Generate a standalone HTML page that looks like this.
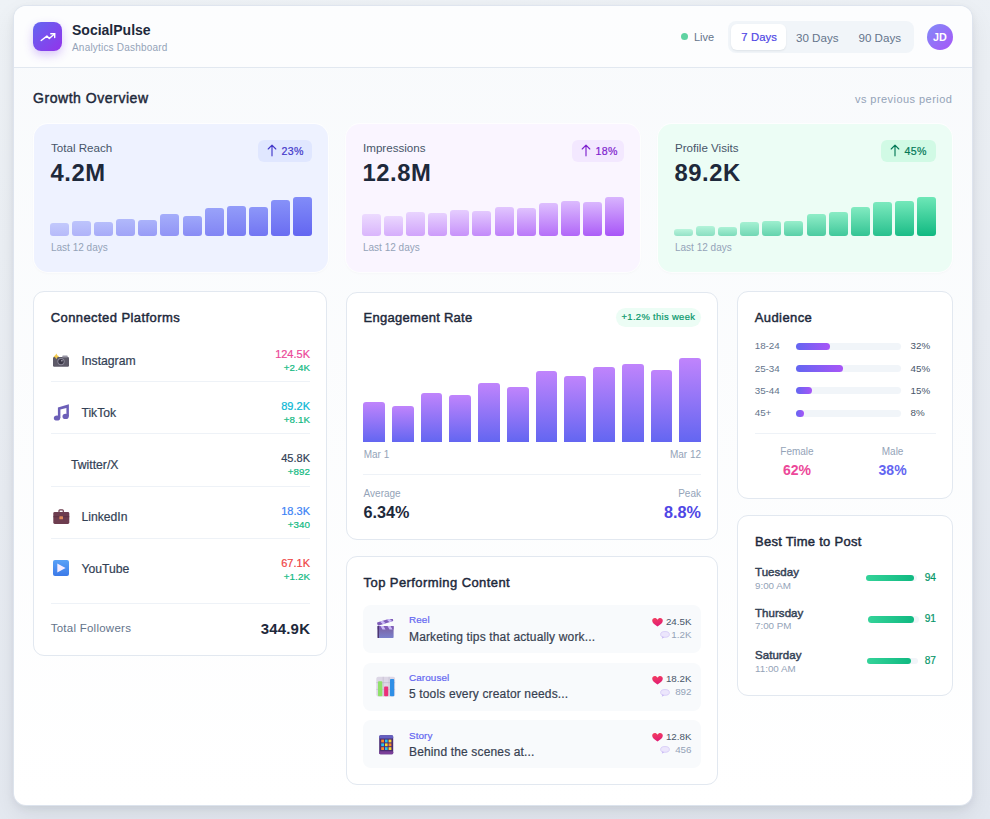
<!DOCTYPE html>
<html><head><meta charset="utf-8">
<style>
*{box-sizing:border-box;margin:0;padding:0}
html,body{width:990px;height:819px;overflow:hidden}
body{font-family:"Liberation Sans",sans-serif;background:linear-gradient(170deg,#eef2f6 0%,#e8ecf2 50%,#e2e7ef 100%);position:relative;color:#1e293b}
.t{position:absolute;white-space:nowrap;line-height:1}
.abs{position:absolute}
#shell{position:absolute;left:14px;top:6px;width:958px;height:799px;border-radius:12px;background:linear-gradient(180deg,#f8fafc 0%,#ffffff 100%);box-shadow:0 0 0 1px rgba(222,228,238,.9),0 10px 24px rgba(15,23,42,.08),0 3px 8px rgba(15,23,42,.07);overflow:hidden}
#hdr{position:absolute;left:0;top:0;width:958px;height:62px;background:rgba(255,255,255,.6);border-bottom:1px solid #e2e8f0}
</style></head><body>
<div id="shell"><div id="hdr"></div></div>
<div class="abs" style="left:33px;top:22px;width:29px;height:29px;border-radius:8px;background:linear-gradient(135deg,#6366f1 0%,#9333ea 100%);box-shadow:0 4px 10px rgba(124,58,237,.28)"></div>
<svg class="abs" style="left:33px;top:22px" width="29" height="29" viewBox="0 0 29 29"><polyline points="8.2,18.5 13.9,14.1 16.3,16.6 21.7,11.7" fill="none" stroke="#fff" stroke-width="1.4" stroke-linecap="round" stroke-linejoin="round"/><polyline points="17.8,11.7 21.7,11.7 21.7,15.6" fill="none" stroke="#fff" stroke-width="1.4" stroke-linecap="round" stroke-linejoin="round"/></svg>
<div class="t" style="top:23.15px;font-size:14px;color:#1e293b;font-weight:700;left:72px;">SocialPulse</div>
<div class="t" style="top:42.73px;font-size:10px;color:#94a3b8;letter-spacing:0.2px;left:72px;">Analytics Dashboard</div>
<div class="abs" style="left:681px;top:33.3px;width:7px;height:7px;border-radius:50%;background:#5fd3a2"></div>
<div class="t" style="top:32.09px;font-size:11px;color:#64748b;left:694px;">Live</div>
<div class="abs" style="left:728px;top:21px;width:186px;height:32px;border-radius:8px;background:#f1f5f9"></div>
<div class="abs" style="left:731px;top:24px;width:55px;height:26px;border-radius:6px;background:#fff;box-shadow:0 1px 2px rgba(15,23,42,.08)"></div>
<div class="t" style="top:31.83px;font-size:11.3px;color:#4f46e5;-webkit-text-stroke:0.2px #4f46e5;letter-spacing:0.1px;left:741.3px;">7 Days</div>
<div class="t" style="top:31.58px;font-size:11.6px;color:#64748b;left:796px;">30 Days</div>
<div class="t" style="top:31.58px;font-size:11.6px;color:#64748b;left:858.5px;">90 Days</div>
<div class="abs" style="left:927px;top:24px;width:26px;height:26px;border-radius:50%;background:linear-gradient(135deg,#818cf8 0%,#a855f7 100%)"></div>
<div class="t" style="top:32.16px;font-size:10.8px;color:#fff;font-weight:700;left:840px;width:200px;text-align:center;">JD</div>
<div class="t" style="top:91.25px;font-size:14px;color:#1e293b;-webkit-text-stroke:0.45px #1e293b;letter-spacing:0.55px;left:33px;">Growth Overview</div>
<div class="t" style="top:93.69px;font-size:11px;color:#94a3b8;letter-spacing:0.45px;right:37.700000000000045px;">vs previous period</div>
<div class="abs" style="left:34px;top:124px;width:294px;height:148px;border-radius:14px;background:#eef2ff;box-shadow:0 0 0 1px rgba(255,255,255,.8),0 1px 3px rgba(15,23,42,.04)"></div>
<div class="t" style="top:141.98px;font-size:11.6px;color:#475569;left:51px;">Total Reach</div>
<div class="t" style="top:160.65px;font-size:23.8px;color:#1e293b;font-weight:700;letter-spacing:0.5px;left:50.6px;">4.2M</div>
<div class="abs" style="left:257.5px;top:140px;width:54px;height:22px;border-radius:6px;background:#e0e7ff"></div>
<svg class="abs" style="left:266.5px;top:144px" width="10" height="13" viewBox="0 0 10 13"><path d="M5 11.8V1.2M1.2 5L5 1.2L8.8 5" fill="none" stroke="#4338ca" stroke-width="1.15" stroke-linecap="round" stroke-linejoin="round"/></svg>
<div class="t" style="top:145.82px;font-size:10.6px;color:#4338ca;-webkit-text-stroke:0.2px #4338ca;letter-spacing:0.3px;left:281.5px;">23%</div>
<div class="abs" style="left:50.0px;top:223px;width:19.08px;height:13px;border-radius:3px;background:linear-gradient(180deg,#818cf8,#6366f1);opacity:0.40"></div>
<div class="abs" style="left:72.08px;top:221px;width:19.08px;height:15px;border-radius:3px;background:linear-gradient(180deg,#818cf8,#6366f1);opacity:0.45"></div>
<div class="abs" style="left:94.17px;top:222px;width:19.08px;height:14px;border-radius:3px;background:linear-gradient(180deg,#818cf8,#6366f1);opacity:0.51"></div>
<div class="abs" style="left:116.25px;top:219px;width:19.08px;height:17px;border-radius:3px;background:linear-gradient(180deg,#818cf8,#6366f1);opacity:0.56"></div>
<div class="abs" style="left:138.33px;top:220px;width:19.08px;height:16px;border-radius:3px;background:linear-gradient(180deg,#818cf8,#6366f1);opacity:0.62"></div>
<div class="abs" style="left:160.42px;top:214px;width:19.08px;height:22px;border-radius:3px;background:linear-gradient(180deg,#818cf8,#6366f1);opacity:0.67"></div>
<div class="abs" style="left:182.5px;top:216px;width:19.08px;height:20px;border-radius:3px;background:linear-gradient(180deg,#818cf8,#6366f1);opacity:0.73"></div>
<div class="abs" style="left:204.58px;top:208px;width:19.08px;height:28px;border-radius:3px;background:linear-gradient(180deg,#818cf8,#6366f1);opacity:0.78"></div>
<div class="abs" style="left:226.67px;top:206px;width:19.08px;height:30px;border-radius:3px;background:linear-gradient(180deg,#818cf8,#6366f1);opacity:0.84"></div>
<div class="abs" style="left:248.75px;top:207px;width:19.08px;height:29px;border-radius:3px;background:linear-gradient(180deg,#818cf8,#6366f1);opacity:0.89"></div>
<div class="abs" style="left:270.83px;top:200px;width:19.08px;height:36px;border-radius:3px;background:linear-gradient(180deg,#818cf8,#6366f1);opacity:0.95"></div>
<div class="abs" style="left:292.92px;top:197px;width:19.08px;height:39px;border-radius:3px;background:linear-gradient(180deg,#818cf8,#6366f1);opacity:1.00"></div>
<div class="t" style="top:242.53px;font-size:10px;color:#94a3b8;left:51px;">Last 12 days</div>
<div class="abs" style="left:346px;top:124px;width:294px;height:148px;border-radius:14px;background:#faf5ff;box-shadow:0 0 0 1px rgba(255,255,255,.8),0 1px 3px rgba(15,23,42,.04)"></div>
<div class="t" style="top:141.98px;font-size:11.6px;color:#475569;left:363px;">Impressions</div>
<div class="t" style="top:160.65px;font-size:23.8px;color:#1e293b;font-weight:700;letter-spacing:0.5px;left:362.6px;">12.8M</div>
<div class="abs" style="left:571.5px;top:140px;width:52px;height:22px;border-radius:6px;background:#f3e8ff"></div>
<svg class="abs" style="left:580.5px;top:144px" width="10" height="13" viewBox="0 0 10 13"><path d="M5 11.8V1.2M1.2 5L5 1.2L8.8 5" fill="none" stroke="#7e22ce" stroke-width="1.15" stroke-linecap="round" stroke-linejoin="round"/></svg>
<div class="t" style="top:145.82px;font-size:10.6px;color:#7e22ce;-webkit-text-stroke:0.2px #7e22ce;letter-spacing:0.3px;left:595.5px;">18%</div>
<div class="abs" style="left:362.0px;top:214.3px;width:19.08px;height:21.7px;border-radius:3px;background:linear-gradient(180deg,#d8b4fe,#a855f7);opacity:0.40"></div>
<div class="abs" style="left:384.08px;top:216.3px;width:19.08px;height:19.7px;border-radius:3px;background:linear-gradient(180deg,#d8b4fe,#a855f7);opacity:0.45"></div>
<div class="abs" style="left:406.17px;top:212.4px;width:19.08px;height:23.6px;border-radius:3px;background:linear-gradient(180deg,#d8b4fe,#a855f7);opacity:0.51"></div>
<div class="abs" style="left:428.25px;top:213.4px;width:19.08px;height:22.6px;border-radius:3px;background:linear-gradient(180deg,#d8b4fe,#a855f7);opacity:0.56"></div>
<div class="abs" style="left:450.33px;top:210.1px;width:19.08px;height:25.9px;border-radius:3px;background:linear-gradient(180deg,#d8b4fe,#a855f7);opacity:0.62"></div>
<div class="abs" style="left:472.42px;top:211.4px;width:19.08px;height:24.6px;border-radius:3px;background:linear-gradient(180deg,#d8b4fe,#a855f7);opacity:0.67"></div>
<div class="abs" style="left:494.5px;top:207.2px;width:19.08px;height:28.8px;border-radius:3px;background:linear-gradient(180deg,#d8b4fe,#a855f7);opacity:0.73"></div>
<div class="abs" style="left:516.58px;top:208.2px;width:19.08px;height:27.8px;border-radius:3px;background:linear-gradient(180deg,#d8b4fe,#a855f7);opacity:0.78"></div>
<div class="abs" style="left:538.67px;top:203.4px;width:19.08px;height:32.6px;border-radius:3px;background:linear-gradient(180deg,#d8b4fe,#a855f7);opacity:0.84"></div>
<div class="abs" style="left:560.75px;top:200.5px;width:19.08px;height:35.5px;border-radius:3px;background:linear-gradient(180deg,#d8b4fe,#a855f7);opacity:0.89"></div>
<div class="abs" style="left:582.83px;top:202.4px;width:19.08px;height:33.6px;border-radius:3px;background:linear-gradient(180deg,#d8b4fe,#a855f7);opacity:0.95"></div>
<div class="abs" style="left:604.92px;top:197.2px;width:19.08px;height:38.8px;border-radius:3px;background:linear-gradient(180deg,#d8b4fe,#a855f7);opacity:1.00"></div>
<div class="t" style="top:242.53px;font-size:10px;color:#94a3b8;left:363px;">Last 12 days</div>
<div class="abs" style="left:658px;top:124px;width:294px;height:148px;border-radius:14px;background:#ecfdf5;box-shadow:0 0 0 1px rgba(255,255,255,.8),0 1px 3px rgba(15,23,42,.04)"></div>
<div class="t" style="top:141.98px;font-size:11.6px;color:#475569;left:675px;">Profile Visits</div>
<div class="t" style="top:160.65px;font-size:23.8px;color:#1e293b;font-weight:700;letter-spacing:0.5px;left:674.6px;">89.2K</div>
<div class="abs" style="left:880.5px;top:140px;width:55px;height:22px;border-radius:6px;background:#d1fae5"></div>
<svg class="abs" style="left:889.5px;top:144px" width="10" height="13" viewBox="0 0 10 13"><path d="M5 11.8V1.2M1.2 5L5 1.2L8.8 5" fill="none" stroke="#047857" stroke-width="1.15" stroke-linecap="round" stroke-linejoin="round"/></svg>
<div class="t" style="top:145.82px;font-size:10.6px;color:#047857;-webkit-text-stroke:0.2px #047857;letter-spacing:0.3px;left:904.5px;">45%</div>
<div class="abs" style="left:674.0px;top:228.6px;width:19.08px;height:7.4px;border-radius:3px;background:linear-gradient(180deg,#6ee7b7,#10b981);opacity:0.40"></div>
<div class="abs" style="left:696.08px;top:226.3px;width:19.08px;height:9.7px;border-radius:3px;background:linear-gradient(180deg,#6ee7b7,#10b981);opacity:0.45"></div>
<div class="abs" style="left:718.17px;top:227.3px;width:19.08px;height:8.7px;border-radius:3px;background:linear-gradient(180deg,#6ee7b7,#10b981);opacity:0.51"></div>
<div class="abs" style="left:740.25px;top:222.4px;width:19.08px;height:13.6px;border-radius:3px;background:linear-gradient(180deg,#6ee7b7,#10b981);opacity:0.56"></div>
<div class="abs" style="left:762.33px;top:220.5px;width:19.08px;height:15.5px;border-radius:3px;background:linear-gradient(180deg,#6ee7b7,#10b981);opacity:0.62"></div>
<div class="abs" style="left:784.42px;top:221.4px;width:19.08px;height:14.6px;border-radius:3px;background:linear-gradient(180deg,#6ee7b7,#10b981);opacity:0.67"></div>
<div class="abs" style="left:806.5px;top:214.3px;width:19.08px;height:21.7px;border-radius:3px;background:linear-gradient(180deg,#6ee7b7,#10b981);opacity:0.73"></div>
<div class="abs" style="left:828.58px;top:212.4px;width:19.08px;height:23.6px;border-radius:3px;background:linear-gradient(180deg,#6ee7b7,#10b981);opacity:0.78"></div>
<div class="abs" style="left:850.67px;top:207.2px;width:19.08px;height:28.8px;border-radius:3px;background:linear-gradient(180deg,#6ee7b7,#10b981);opacity:0.84"></div>
<div class="abs" style="left:872.75px;top:202.4px;width:19.08px;height:33.6px;border-radius:3px;background:linear-gradient(180deg,#6ee7b7,#10b981);opacity:0.89"></div>
<div class="abs" style="left:894.83px;top:200.5px;width:19.08px;height:35.5px;border-radius:3px;background:linear-gradient(180deg,#6ee7b7,#10b981);opacity:0.95"></div>
<div class="abs" style="left:916.92px;top:197.2px;width:19.08px;height:38.8px;border-radius:3px;background:linear-gradient(180deg,#6ee7b7,#10b981);opacity:1.00"></div>
<div class="t" style="top:242.53px;font-size:10px;color:#94a3b8;left:675px;">Last 12 days</div>
<div class="abs" style="left:33px;top:291px;width:294px;height:365px;border-radius:11px;background:#fff;border:1px solid #e2e8f0"></div>
<div class="t" style="top:310.99px;font-size:13px;color:#1e293b;-webkit-text-stroke:0.45px #1e293b;letter-spacing:0.42px;left:50.7px;">Connected Platforms</div>
<svg class="abs" style="left:52px;top:353px" width="18" height="15" viewBox="0 0 18 15"><rect x="1" y="4" width="16" height="9.8" rx="1.2" fill="#5d5a68"/><rect x="10.3" y="2.6" width="5.4" height="2" rx="0.7" fill="#9a97a6"/><circle cx="9" cy="8.6" r="3.6" fill="#8e8b9b"/><circle cx="9" cy="8.6" r="2.7" fill="#3b3847"/><circle cx="9.9" cy="7.8" r="0.7" fill="#c9c6d4"/><path d="M4.3 0.6 Q4.8 2.7 7.1 3.4 Q4.8 4.1 4.3 6.2 Q3.8 4.1 1.5 3.4 Q3.8 2.7 4.3 0.6 Z" fill="#f2c94c"/></svg>
<div class="t" style="top:354.77px;font-size:12.2px;color:#334155;-webkit-text-stroke:0.2px #334155;left:81.4px;">Instagram</div>
<div class="t" style="top:348.69px;font-size:11px;color:#ec4899;-webkit-text-stroke:0.2px #ec4899;right:680px;">124.5K</div>
<div class="t" style="top:362.70px;font-size:9.8px;color:#10b981;-webkit-text-stroke:0.2px #10b981;letter-spacing:0.1px;right:679.9px;">+2.4K</div>
<div class="abs" style="left:50.7px;top:381.0px;width:259.3px;height:1px;background:#eef2f7"></div>
<svg class="abs" style="left:53px;top:403px" width="17" height="18" viewBox="0 0 17 18"><path d="M4.9 4.4 L15.9 1.2 L15.9 13.5 L13.4 13.5 L13.4 4.9 L7.4 6.6 L7.4 15 L4.9 15 Z" fill="#6c5fb8"/><ellipse cx="4" cy="15" rx="3.2" ry="2.6" fill="#6c5fb8"/><ellipse cx="12.6" cy="13.4" rx="3.1" ry="2.6" fill="#6c5fb8"/></svg>
<div class="t" style="top:406.77px;font-size:12.2px;color:#334155;-webkit-text-stroke:0.2px #334155;left:81.4px;">TikTok</div>
<div class="t" style="top:400.99px;font-size:11px;color:#06b6d4;-webkit-text-stroke:0.2px #06b6d4;right:680px;">89.2K</div>
<div class="t" style="top:415.00px;font-size:9.8px;color:#10b981;-webkit-text-stroke:0.2px #10b981;letter-spacing:0.1px;right:679.9px;">+8.1K</div>
<div class="abs" style="left:50.7px;top:433.3px;width:259.3px;height:1px;background:#eef2f7"></div>
<div class="t" style="top:458.77px;font-size:12.2px;color:#334155;-webkit-text-stroke:0.2px #334155;left:71px;">Twitter/X</div>
<div class="t" style="top:453.29px;font-size:11px;color:#334155;-webkit-text-stroke:0.2px #334155;right:680px;">45.8K</div>
<div class="t" style="top:467.30px;font-size:9.8px;color:#10b981;-webkit-text-stroke:0.2px #10b981;letter-spacing:0.1px;right:679.9px;">+892</div>
<div class="abs" style="left:50.7px;top:485.6px;width:259.3px;height:1px;background:#eef2f7"></div>
<svg class="abs" style="left:53px;top:509px" width="17" height="16" viewBox="0 0 17 16"><path d="M6 3.2 V1.8 Q6 0.9 6.9 0.9 H9.4 Q10.3 0.9 10.3 1.8 V3.2" fill="none" stroke="#6d3d4f" stroke-width="1.2"/><rect x="0.3" y="3" width="16" height="12" rx="1.4" fill="#6d3d4f"/><rect x="0.3" y="7.4" width="16" height="0.8" fill="#5a2f40"/><rect x="6.4" y="7.2" width="3.6" height="3" rx="0.5" fill="#e08a5a"/></svg>
<div class="t" style="top:510.77px;font-size:12.2px;color:#334155;-webkit-text-stroke:0.2px #334155;left:81.4px;">LinkedIn</div>
<div class="t" style="top:505.59px;font-size:11px;color:#3b82f6;-webkit-text-stroke:0.2px #3b82f6;right:680px;">18.3K</div>
<div class="t" style="top:519.60px;font-size:9.8px;color:#10b981;-webkit-text-stroke:0.2px #10b981;letter-spacing:0.1px;right:679.9px;">+340</div>
<div class="abs" style="left:50.7px;top:537.9px;width:259.3px;height:1px;background:#eef2f7"></div>
<svg class="abs" style="left:53px;top:560px" width="17" height="17" viewBox="0 0 17 17"><defs><linearGradient id="ytg" x1="0" y1="0" x2="0" y2="1"><stop offset="0" stop-color="#5aa2f7"/><stop offset="1" stop-color="#3b7ae8"/></linearGradient></defs><rect x="0" y="0" width="16" height="16" rx="2" fill="url(#ytg)"/><path d="M4.3 3.4 L12.6 8 L4.3 12.6 Z" fill="#f5ecff"/></svg>
<div class="t" style="top:562.77px;font-size:12.2px;color:#334155;-webkit-text-stroke:0.2px #334155;left:81.4px;">YouTube</div>
<div class="t" style="top:557.89px;font-size:11px;color:#ef4444;-webkit-text-stroke:0.2px #ef4444;right:680px;">67.1K</div>
<div class="t" style="top:571.90px;font-size:9.8px;color:#10b981;-webkit-text-stroke:0.2px #10b981;letter-spacing:0.1px;right:679.9px;">+1.2K</div>
<div class="abs" style="left:50.7px;top:603px;width:259.3px;height:1px;background:#eef2f7"></div>
<div class="t" style="top:622.66px;font-size:11.5px;color:#64748b;letter-spacing:0.25px;left:50.7px;">Total Followers</div>
<div class="t" style="top:621.30px;font-size:15px;color:#1e293b;font-weight:700;letter-spacing:0.2px;right:679.8px;">344.9K</div>
<div class="abs" style="left:346px;top:291.5px;width:372px;height:248px;border-radius:11px;background:#fff;border:1px solid #e2e8f0"></div>
<div class="t" style="top:310.99px;font-size:13px;color:#1e293b;-webkit-text-stroke:0.45px #1e293b;letter-spacing:0.27px;left:363.6px;">Engagement Rate</div>
<div class="abs" style="left:615.8px;top:308px;width:85.2px;height:19px;border-radius:10px;background:#ecfdf5"></div>
<div class="t" style="top:312.04px;font-size:9.4px;color:#059669;-webkit-text-stroke:0.2px #059669;letter-spacing:0.35px;left:558.4px;width:200px;text-align:center;">+1.2% this week</div>
<div class="abs" style="left:363.0px;top:402.2px;width:21.8px;height:39.6px;border-radius:3px 3px 0 0;background:linear-gradient(180deg,#c084fc 0%,#6366f1 100%)"></div>
<div class="abs" style="left:391.75px;top:406.2px;width:21.8px;height:35.6px;border-radius:3px 3px 0 0;background:linear-gradient(180deg,#c084fc 0%,#6366f1 100%)"></div>
<div class="abs" style="left:420.5px;top:393.3px;width:21.8px;height:48.5px;border-radius:3px 3px 0 0;background:linear-gradient(180deg,#c084fc 0%,#6366f1 100%)"></div>
<div class="abs" style="left:449.25px;top:395.1px;width:21.8px;height:46.7px;border-radius:3px 3px 0 0;background:linear-gradient(180deg,#c084fc 0%,#6366f1 100%)"></div>
<div class="abs" style="left:478.0px;top:383.1px;width:21.8px;height:58.7px;border-radius:3px 3px 0 0;background:linear-gradient(180deg,#c084fc 0%,#6366f1 100%)"></div>
<div class="abs" style="left:506.75px;top:387.3px;width:21.8px;height:54.5px;border-radius:3px 3px 0 0;background:linear-gradient(180deg,#c084fc 0%,#6366f1 100%)"></div>
<div class="abs" style="left:535.5px;top:371.1px;width:21.8px;height:70.7px;border-radius:3px 3px 0 0;background:linear-gradient(180deg,#c084fc 0%,#6366f1 100%)"></div>
<div class="abs" style="left:564.25px;top:376.0px;width:21.8px;height:65.8px;border-radius:3px 3px 0 0;background:linear-gradient(180deg,#c084fc 0%,#6366f1 100%)"></div>
<div class="abs" style="left:593.0px;top:367.2px;width:21.8px;height:74.6px;border-radius:3px 3px 0 0;background:linear-gradient(180deg,#c084fc 0%,#6366f1 100%)"></div>
<div class="abs" style="left:621.75px;top:363.6px;width:21.8px;height:78.2px;border-radius:3px 3px 0 0;background:linear-gradient(180deg,#c084fc 0%,#6366f1 100%)"></div>
<div class="abs" style="left:650.5px;top:369.8px;width:21.8px;height:72px;border-radius:3px 3px 0 0;background:linear-gradient(180deg,#c084fc 0%,#6366f1 100%)"></div>
<div class="abs" style="left:679.25px;top:358.0px;width:21.8px;height:83.8px;border-radius:3px 3px 0 0;background:linear-gradient(180deg,#c084fc 0%,#6366f1 100%)"></div>
<div class="t" style="top:449.73px;font-size:10px;color:#94a3b8;left:363.7px;">Mar 1</div>
<div class="t" style="top:449.73px;font-size:10px;color:#94a3b8;right:289px;">Mar 12</div>
<div class="abs" style="left:363px;top:474px;width:338px;height:1px;background:#eef2f7"></div>
<div class="t" style="top:488.53px;font-size:10px;color:#94a3b8;left:363.6px;">Average</div>
<div class="t" style="top:503.78px;font-size:16.2px;color:#1e293b;font-weight:700;left:363.6px;">6.34%</div>
<div class="t" style="top:488.53px;font-size:10px;color:#94a3b8;right:289px;">Peak</div>
<div class="t" style="top:503.78px;font-size:16.2px;color:#4f46e5;font-weight:700;right:289px;">8.8%</div>
<div class="abs" style="left:346px;top:556px;width:372px;height:228.5px;border-radius:11px;background:#fff;border:1px solid #e2e8f0"></div>
<div class="t" style="top:576.19px;font-size:13px;color:#1e293b;-webkit-text-stroke:0.45px #1e293b;letter-spacing:0.42px;left:363.6px;">Top Performing Content</div>
<div class="abs" style="left:363px;top:604.9px;width:338px;height:48.3px;border-radius:8px;background:#f8fafc"></div>
<svg class="abs" style="left:377px;top:618.5px" width="18" height="20" viewBox="0 0 18 20"><defs><linearGradient id="clg" x1="0" y1="0" x2="0" y2="1"><stop offset="0" stop-color="#7b5f9e"/><stop offset="1" stop-color="#7a80cc"/></linearGradient></defs><rect x="0.6" y="7" width="16" height="12" rx="0.8" fill="url(#clg)"/><rect x="0.6" y="7" width="16" height="3.4" fill="#7e5cb8"/><path d="M3.5 7 L5.5 10.4 L8.5 10.4 L6.5 7 Z M10.5 7 L12.5 10.4 L15.5 10.4 L13.5 7 Z" fill="#c9b8f5"/><g transform="rotate(-17 1.5 6.5)"><rect x="0.8" y="3.2" width="16.3" height="3.3" rx="1" fill="#7e5cb8"/><path d="M4 3.2 L6 6.5 L9 6.5 L7 3.2 Z M11 3.2 L13 6.5 L16 6.5 L14 3.2 Z" fill="#c9b8f5"/></g><rect x="0.6" y="7" width="1.4" height="12" fill="#4b3571"/></svg>
<div class="t" style="top:615.42px;font-size:9.9px;color:#6366f1;-webkit-text-stroke:0.2px #6366f1;letter-spacing:0.1px;left:409px;">Reel</div>
<div class="t" style="top:630.54px;font-size:12px;color:#374151;-webkit-text-stroke:0.2px #374151;letter-spacing:0.15px;left:409px;">Marketing tips that actually work...</div>
<div class="t" style="top:616.50px;font-size:9.8px;color:#475569;right:298.5px;">24.5K</div>
<div class="t" style="top:629.60px;font-size:9.8px;color:#94a3b8;right:298.5px;">1.2K</div>
<svg class="abs" style="left:652.2px;top:618.1px" width="11" height="9" viewBox="0 0 11 9"><defs><linearGradient id="hg0" x1="0" y1="0" x2="0.3" y2="1"><stop offset="0" stop-color="#f43f5e"/><stop offset="1" stop-color="#e11d74"/></linearGradient></defs><path d="M5.5 8.6 C2.5 6.6 0.2 4.8 0.2 2.8 C0.2 1.2 1.4 0.1 2.8 0.1 C3.9 0.1 4.9 0.8 5.5 1.7 C6.1 0.8 7.1 0.1 8.2 0.1 C9.6 0.1 10.8 1.2 10.8 2.8 C10.8 4.8 8.5 6.6 5.5 8.6 Z" fill="url(#hg0)"/></svg>
<svg class="abs" style="left:659.8px;top:631.1px" width="10" height="8" viewBox="0 0 10 8"><ellipse cx="5" cy="3.4" rx="4.4" ry="2.9" fill="#ece6fc" stroke="#cbbcf5" stroke-width="0.6"/><path d="M2.2 5.6 L1.8 7.8 L4.4 6.2 Z" fill="#cbbcf5"/></svg>
<div class="abs" style="left:363px;top:662.5px;width:338px;height:48.3px;border-radius:8px;background:#f8fafc"></div>
<svg class="abs" style="left:375.8px;top:675.6px" width="20" height="21" viewBox="0 0 20 21"><rect x="0.3" y="0.8" width="18.8" height="19.6" rx="2" fill="#ddd7e6"/><path d="M7.2 0.8V20.4M13.1 0.8V20.4M0.3 6.6H19.1M0.3 13.4H19.1" stroke="#b9b2c6" stroke-width="0.5"/><rect x="2" y="5.2" width="4.3" height="15" rx="0.8" fill="#8fe06a"/><rect x="8.1" y="10.6" width="4.1" height="9.6" rx="0.8" fill="#ec2f7a"/><rect x="14" y="3" width="4.2" height="17.2" rx="0.8" fill="#2f8fe6"/></svg>
<div class="t" style="top:673.02px;font-size:9.9px;color:#6366f1;-webkit-text-stroke:0.2px #6366f1;letter-spacing:0.1px;left:409px;">Carousel</div>
<div class="t" style="top:688.14px;font-size:12px;color:#374151;-webkit-text-stroke:0.2px #374151;letter-spacing:0.15px;left:409px;">5 tools every creator needs...</div>
<div class="t" style="top:674.10px;font-size:9.8px;color:#475569;right:298.5px;">18.2K</div>
<div class="t" style="top:687.20px;font-size:9.8px;color:#94a3b8;right:298.5px;">892</div>
<svg class="abs" style="left:652.2px;top:675.7px" width="11" height="9" viewBox="0 0 11 9"><defs><linearGradient id="hg1" x1="0" y1="0" x2="0.3" y2="1"><stop offset="0" stop-color="#f43f5e"/><stop offset="1" stop-color="#e11d74"/></linearGradient></defs><path d="M5.5 8.6 C2.5 6.6 0.2 4.8 0.2 2.8 C0.2 1.2 1.4 0.1 2.8 0.1 C3.9 0.1 4.9 0.8 5.5 1.7 C6.1 0.8 7.1 0.1 8.2 0.1 C9.6 0.1 10.8 1.2 10.8 2.8 C10.8 4.8 8.5 6.6 5.5 8.6 Z" fill="url(#hg1)"/></svg>
<svg class="abs" style="left:659.8px;top:688.7px" width="10" height="8" viewBox="0 0 10 8"><ellipse cx="5" cy="3.4" rx="4.4" ry="2.9" fill="#ece6fc" stroke="#cbbcf5" stroke-width="0.6"/><path d="M2.2 5.6 L1.8 7.8 L4.4 6.2 Z" fill="#cbbcf5"/></svg>
<div class="abs" style="left:363px;top:720.1px;width:338px;height:48.3px;border-radius:8px;background:#f8fafc"></div>
<svg class="abs" style="left:379px;top:734.9px" width="15" height="20" viewBox="0 0 15 20"><rect x="0.2" y="0.3" width="14" height="19" rx="1.6" fill="#4a2c72"/><rect x="0.2" y="0.3" width="14" height="3.2" rx="1.2" fill="#6560c2"/><rect x="0.2" y="16.2" width="14" height="3.1" rx="1" fill="#7a3f98"/><g><rect x="2.2" y="4.6" width="2.8" height="2.8" fill="#f98a2a"/><rect x="6" y="4.6" width="2.6" height="2.8" fill="#27c3f0"/><rect x="9.6" y="4.6" width="2.8" height="2.8" fill="#f7d631"/><rect x="2.2" y="8.4" width="2.8" height="2.8" fill="#27c3f0"/><rect x="6" y="8.4" width="2.6" height="2.8" fill="#f7d631"/><rect x="9.6" y="8.4" width="2.8" height="2.8" fill="#f98a2a"/><rect x="2.2" y="12.2" width="2.8" height="2.8" fill="#f98a2a"/><rect x="6" y="12.2" width="2.6" height="2.8" fill="#27c3f0"/><rect x="9.6" y="12.2" width="2.8" height="2.8" fill="#f7d631"/></g></svg>
<div class="t" style="top:730.62px;font-size:9.9px;color:#6366f1;-webkit-text-stroke:0.2px #6366f1;letter-spacing:0.1px;left:409px;">Story</div>
<div class="t" style="top:745.74px;font-size:12px;color:#374151;-webkit-text-stroke:0.2px #374151;letter-spacing:0.15px;left:409px;">Behind the scenes at...</div>
<div class="t" style="top:731.70px;font-size:9.8px;color:#475569;right:298.5px;">12.8K</div>
<div class="t" style="top:744.80px;font-size:9.8px;color:#94a3b8;right:298.5px;">456</div>
<svg class="abs" style="left:652.2px;top:733.3px" width="11" height="9" viewBox="0 0 11 9"><defs><linearGradient id="hg2" x1="0" y1="0" x2="0.3" y2="1"><stop offset="0" stop-color="#f43f5e"/><stop offset="1" stop-color="#e11d74"/></linearGradient></defs><path d="M5.5 8.6 C2.5 6.6 0.2 4.8 0.2 2.8 C0.2 1.2 1.4 0.1 2.8 0.1 C3.9 0.1 4.9 0.8 5.5 1.7 C6.1 0.8 7.1 0.1 8.2 0.1 C9.6 0.1 10.8 1.2 10.8 2.8 C10.8 4.8 8.5 6.6 5.5 8.6 Z" fill="url(#hg2)"/></svg>
<svg class="abs" style="left:659.8px;top:746.3px" width="10" height="8" viewBox="0 0 10 8"><ellipse cx="5" cy="3.4" rx="4.4" ry="2.9" fill="#ece6fc" stroke="#cbbcf5" stroke-width="0.6"/><path d="M2.2 5.6 L1.8 7.8 L4.4 6.2 Z" fill="#cbbcf5"/></svg>
<div class="abs" style="left:737px;top:291px;width:216px;height:208px;border-radius:11px;background:#fff;border:1px solid #e2e8f0"></div>
<div class="t" style="top:310.79px;font-size:13px;color:#1e293b;-webkit-text-stroke:0.45px #1e293b;letter-spacing:0.42px;left:754.7px;">Audience</div>
<div class="t" style="top:341.20px;font-size:9.8px;color:#64748b;left:754.7px;">18-24</div>
<div class="abs" style="left:796px;top:342.7px;width:105px;height:7px;border-radius:4px;background:#f1f5f9"></div>
<div class="abs" style="left:796px;top:342.7px;width:33.6px;height:7px;border-radius:4px;background:linear-gradient(90deg,#6366f1,#a855f7)"></div>
<div class="t" style="top:341.20px;font-size:9.8px;color:#475569;left:910.6px;">32%</div>
<div class="t" style="top:363.55px;font-size:9.8px;color:#64748b;left:754.7px;">25-34</div>
<div class="abs" style="left:796px;top:365.05px;width:105px;height:7px;border-radius:4px;background:#f1f5f9"></div>
<div class="abs" style="left:796px;top:365.05px;width:47.25px;height:7px;border-radius:4px;background:linear-gradient(90deg,#6366f1,#a855f7)"></div>
<div class="t" style="top:363.55px;font-size:9.8px;color:#475569;left:910.6px;">45%</div>
<div class="t" style="top:385.90px;font-size:9.8px;color:#64748b;left:754.7px;">35-44</div>
<div class="abs" style="left:796px;top:387.4px;width:105px;height:7px;border-radius:4px;background:#f1f5f9"></div>
<div class="abs" style="left:796px;top:387.4px;width:15.75px;height:7px;border-radius:4px;background:linear-gradient(90deg,#6366f1,#a855f7)"></div>
<div class="t" style="top:385.90px;font-size:9.8px;color:#475569;left:910.6px;">15%</div>
<div class="t" style="top:408.25px;font-size:9.8px;color:#64748b;left:754.7px;">45+</div>
<div class="abs" style="left:796px;top:409.75px;width:105px;height:7px;border-radius:4px;background:#f1f5f9"></div>
<div class="abs" style="left:796px;top:409.75px;width:8.4px;height:7px;border-radius:4px;background:linear-gradient(90deg,#6366f1,#a855f7)"></div>
<div class="t" style="top:408.25px;font-size:9.8px;color:#475569;left:910.6px;">8%</div>
<div class="abs" style="left:754.7px;top:433px;width:181.3px;height:1px;background:#eef2f7"></div>
<div class="t" style="top:447.23px;font-size:10px;color:#94a3b8;left:697px;width:200px;text-align:center;">Female</div>
<div class="t" style="top:463.45px;font-size:14px;color:#ec4899;font-weight:700;left:697px;width:200px;text-align:center;">62%</div>
<div class="t" style="top:447.23px;font-size:10px;color:#94a3b8;left:792.6px;width:200px;text-align:center;">Male</div>
<div class="t" style="top:463.45px;font-size:14px;color:#6366f1;font-weight:700;left:792.6px;width:200px;text-align:center;">38%</div>
<div class="abs" style="left:737px;top:515px;width:216px;height:180.5px;border-radius:11px;background:#fff;border:1px solid #e2e8f0"></div>
<div class="t" style="top:535.19px;font-size:13px;color:#1e293b;-webkit-text-stroke:0.45px #1e293b;letter-spacing:0.28px;left:755px;">Best Time to Post</div>
<div class="t" style="top:566.96px;font-size:11.5px;color:#334155;-webkit-text-stroke:0.45px #334155;letter-spacing:0.05px;left:755px;">Tuesday</div>
<div class="t" style="top:580.70px;font-size:9.8px;color:#94a3b8;left:755px;">9:00 AM</div>
<div class="abs" style="left:866px;top:574.6px;width:51px;height:6.6px;border-radius:4px;background:#f1f5f9"></div>
<div class="abs" style="left:866px;top:574.6px;width:47.94px;height:6.6px;border-radius:4px;background:linear-gradient(90deg,#34d399,#10b981)"></div>
<div class="t" style="top:572.86px;font-size:10.2px;color:#059669;-webkit-text-stroke:0.2px #059669;right:54px;">94</div>
<div class="t" style="top:607.66px;font-size:11.5px;color:#334155;-webkit-text-stroke:0.45px #334155;letter-spacing:0.05px;left:755px;">Thursday</div>
<div class="t" style="top:621.40px;font-size:9.8px;color:#94a3b8;left:755px;">7:00 PM</div>
<div class="abs" style="left:868px;top:616.2px;width:51px;height:6.6px;border-radius:4px;background:#f1f5f9"></div>
<div class="abs" style="left:868px;top:616.2px;width:46.41px;height:6.6px;border-radius:4px;background:linear-gradient(90deg,#34d399,#10b981)"></div>
<div class="t" style="top:614.46px;font-size:10.2px;color:#059669;-webkit-text-stroke:0.2px #059669;right:54px;">91</div>
<div class="t" style="top:649.66px;font-size:11.5px;color:#334155;-webkit-text-stroke:0.45px #334155;letter-spacing:0.05px;left:755px;">Saturday</div>
<div class="t" style="top:663.70px;font-size:9.8px;color:#94a3b8;left:755px;">11:00 AM</div>
<div class="abs" style="left:866.6px;top:657.8px;width:51px;height:6.6px;border-radius:4px;background:#f1f5f9"></div>
<div class="abs" style="left:866.6px;top:657.8px;width:44.37px;height:6.6px;border-radius:4px;background:linear-gradient(90deg,#34d399,#10b981)"></div>
<div class="t" style="top:656.06px;font-size:10.2px;color:#059669;-webkit-text-stroke:0.2px #059669;right:54px;">87</div>
</body></html>
